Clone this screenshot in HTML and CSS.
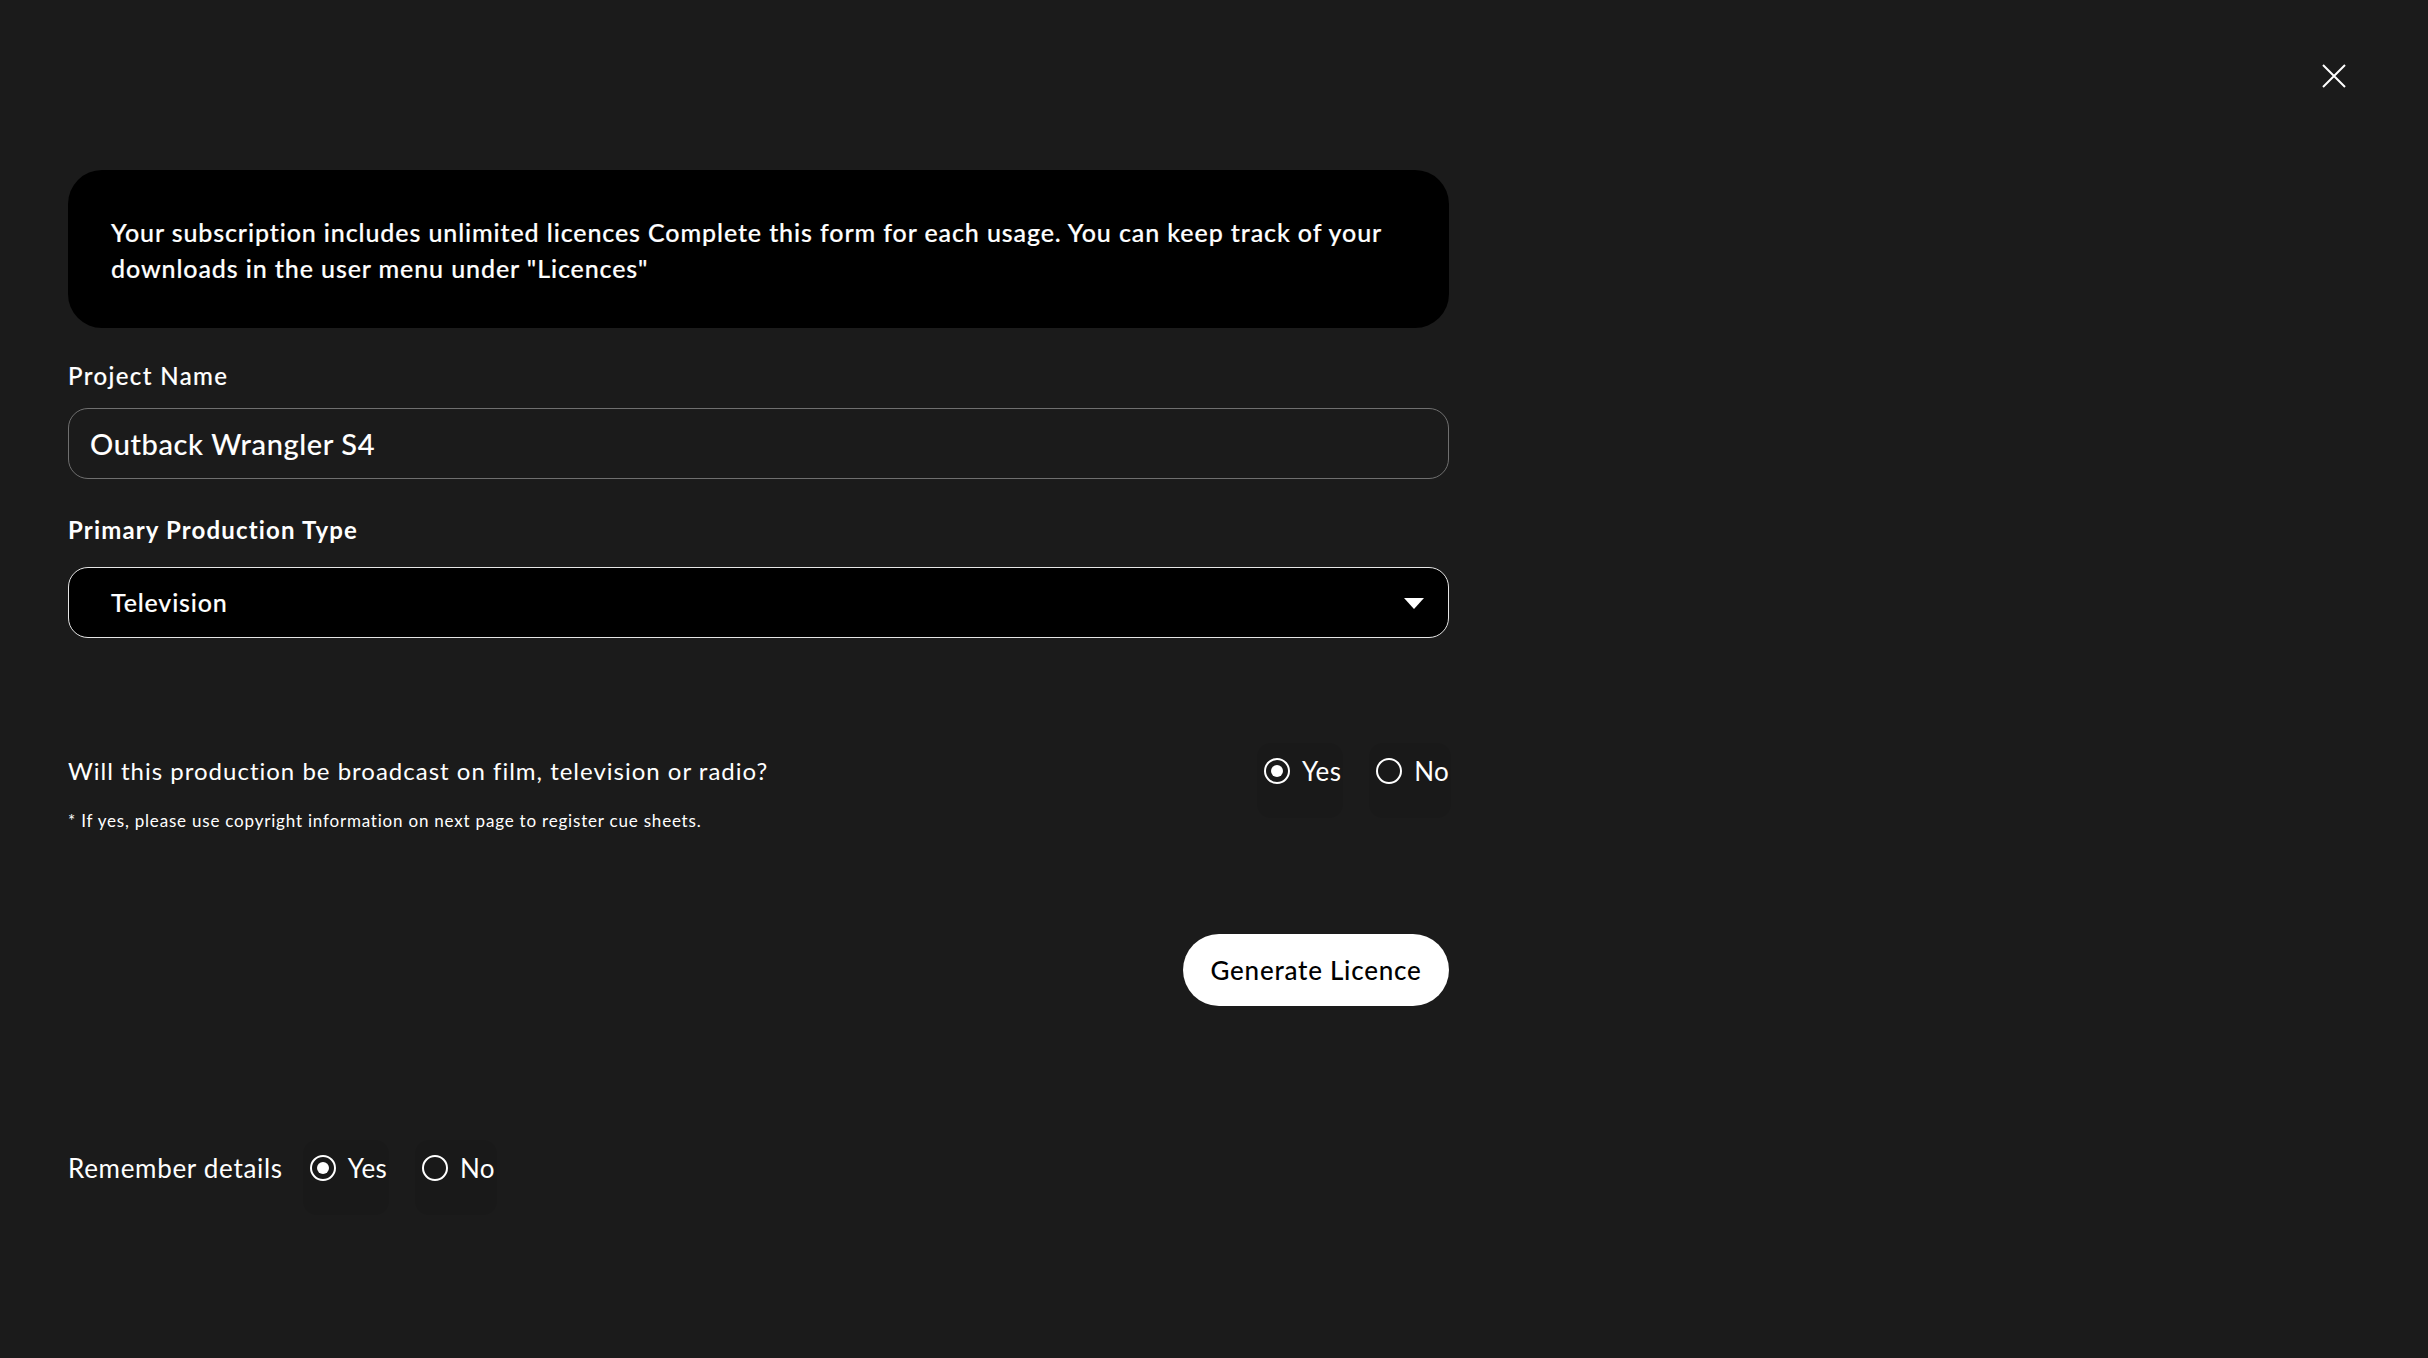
FILE: index.html
```html
<!DOCTYPE html>
<html lang="en">
<head>
<meta charset="utf-8">
<title>Generate Licence</title>
<link rel="stylesheet" href="styles.css">
</head>
<body>
<button class="close" aria-label="Close">
  <svg width="24" height="24" viewBox="0 0 24 24"><path d="M1 1L23 23M23 1L1 23" stroke="#fff" stroke-width="2" fill="none"/></svg>
</button>
<main class="form">
  <div class="info">Your subscription includes unlimited licences Complete this form for each usage. You can keep track of your downloads in the user menu under "Licences"</div>

  <label class="label label-project">Project Name</label>
  <div class="input">Outback Wrangler S4</div>

  <label class="label label-type">Primary Production Type</label>
  <div class="select">
    <span>Television</span>
    <span class="caret"></span>
  </div>

  <div class="question">
    <span class="q-text">Will this production be broadcast on film, television or radio?</span>
    <div class="radios">
      <label class="opt"><span class="radio checked"></span><span>Yes</span></label>
      <label class="opt"><span class="radio"></span><span>No</span></label>
    </div>
  </div>
  <p class="note">* If yes, please use copyright information on next page to register cue sheets.</p>

  <div class="actions">
    <button class="generate">Generate Licence</button>
  </div>

  <div class="remember">
    <span class="rem-text">Remember details</span>
    <div class="radios">
      <label class="opt"><span class="radio checked"></span><span>Yes</span></label>
      <label class="opt"><span class="radio"></span><span>No</span></label>
    </div>
  </div>
</main>
</body>
</html>
```

FILE: styles.css
```css
* { box-sizing: border-box; }
html, body { margin: 0; padding: 0; }
body {
  background: #1b1b1b;
  color: #fff;
  font-family: "Lato", "Open Sans", sans-serif;
  width: 2428px;
  height: 1358px;
  position: relative;
  overflow: hidden;
}
.close {
  position: absolute;
  top: 64px;
  right: 82px;
  width: 24px;
  height: 24px;
  padding: 0;
  border: 0;
  background: none;
  display: block;
}
.close svg { display: block; }

.form {
  margin-left: 68px;
  width: 1381px;
  padding-top: 170px;
  display: flex;
  flex-direction: column;
}
.info {
  background: #000;
  border-radius: 34px;
  padding: 44px 43px 42px;
  font-size: 25px;
  line-height: 36px;
  font-weight: 500;
  letter-spacing: 0.9px;
  -webkit-text-stroke: 0.2px #fff;
  height: 158px;
}
.label {
  display: block;
  font-size: 24px;
  line-height: 30px;
}
.label-project { margin-top: 33px; font-weight: 500; letter-spacing: 1.4px; -webkit-text-stroke: 0.15px #fff; }
.label-type { margin-top: 36px; font-weight: 700; letter-spacing: 1.15px; }
.input {
  margin-top: 17px;
  height: 71px;
  border: 1.5px solid #6f6f6f;
  border-radius: 20px;
  padding: 0 21px;
  display: flex;
  align-items: center;
  font-size: 29px;
  font-weight: 500;
  letter-spacing: 0.6px;
  -webkit-text-stroke: 0.1px #fff;
}
.select {
  margin-top: 22px;
  height: 71px;
  background: #000;
  border: 1.5px solid #e6e6e6;
  border-radius: 20px;
  padding: 0 24px 0 42px;
  display: flex;
  align-items: center;
  justify-content: space-between;
  font-size: 25px;
  font-weight: 500;
  letter-spacing: 0.85px;
  -webkit-text-stroke: 0.15px #fff;
}
.select span:first-child { margin-top: -2px; }
.caret {
  width: 0;
  height: 0;
  border-left: 10.5px solid transparent;
  border-right: 10.5px solid transparent;
  border-top: 11px solid #fff;
  margin-top: 2px;
}
.question {
  margin-top: 118px;
  display: flex;
  justify-content: space-between;
  align-items: center;
  height: 30px;
}
.q-text { font-size: 24px; line-height: 30px; font-weight: 400; letter-spacing: 1px; }
.radios {
  display: flex;
  align-items: center;
  gap: 35px;
}
.opt {
  position: relative;
  display: flex;
  align-items: center;
  gap: 12px;
  font-size: 26px;
  line-height: 30px;
  letter-spacing: 0.3px;
}
.opt::before {
  content: "";
  position: absolute;
  left: -7px;
  right: -2px;
  top: -13px;
  bottom: -32px;
  background: rgba(0, 0, 0, 0.06);
  border-radius: 14px;
  z-index: -1;
}
.radio {
  width: 26px;
  height: 26px;
  border: 2px solid #fff;
  border-radius: 50%;
  display: flex;
  align-items: center;
  justify-content: center;
  flex: none;
}
.radio.checked::after {
  content: "";
  width: 12px;
  height: 12px;
  border-radius: 50%;
  background: #fff;
}
.note {
  margin: 23px 0 0;
  font-size: 17px;
  line-height: 24px;
  letter-spacing: 0.8px;
}
.actions {
  margin-top: 101px;
  display: flex;
  justify-content: flex-end;
}
.generate {
  height: 72px;
  width: 266px;
  border: 0;
  border-radius: 36px;
  background: #fff;
  color: #000;
  font-family: "Lato", "Open Sans", sans-serif;
  font-size: 26px;
  font-weight: 500;
  letter-spacing: 0.75px;
  padding: 0;
}
.remember {
  margin-top: 147px;
  display: flex;
  align-items: center;
  gap: 27px;
  height: 30px;
}
.rem-text { font-size: 26px; line-height: 30px; letter-spacing: 0.7px; }
```
